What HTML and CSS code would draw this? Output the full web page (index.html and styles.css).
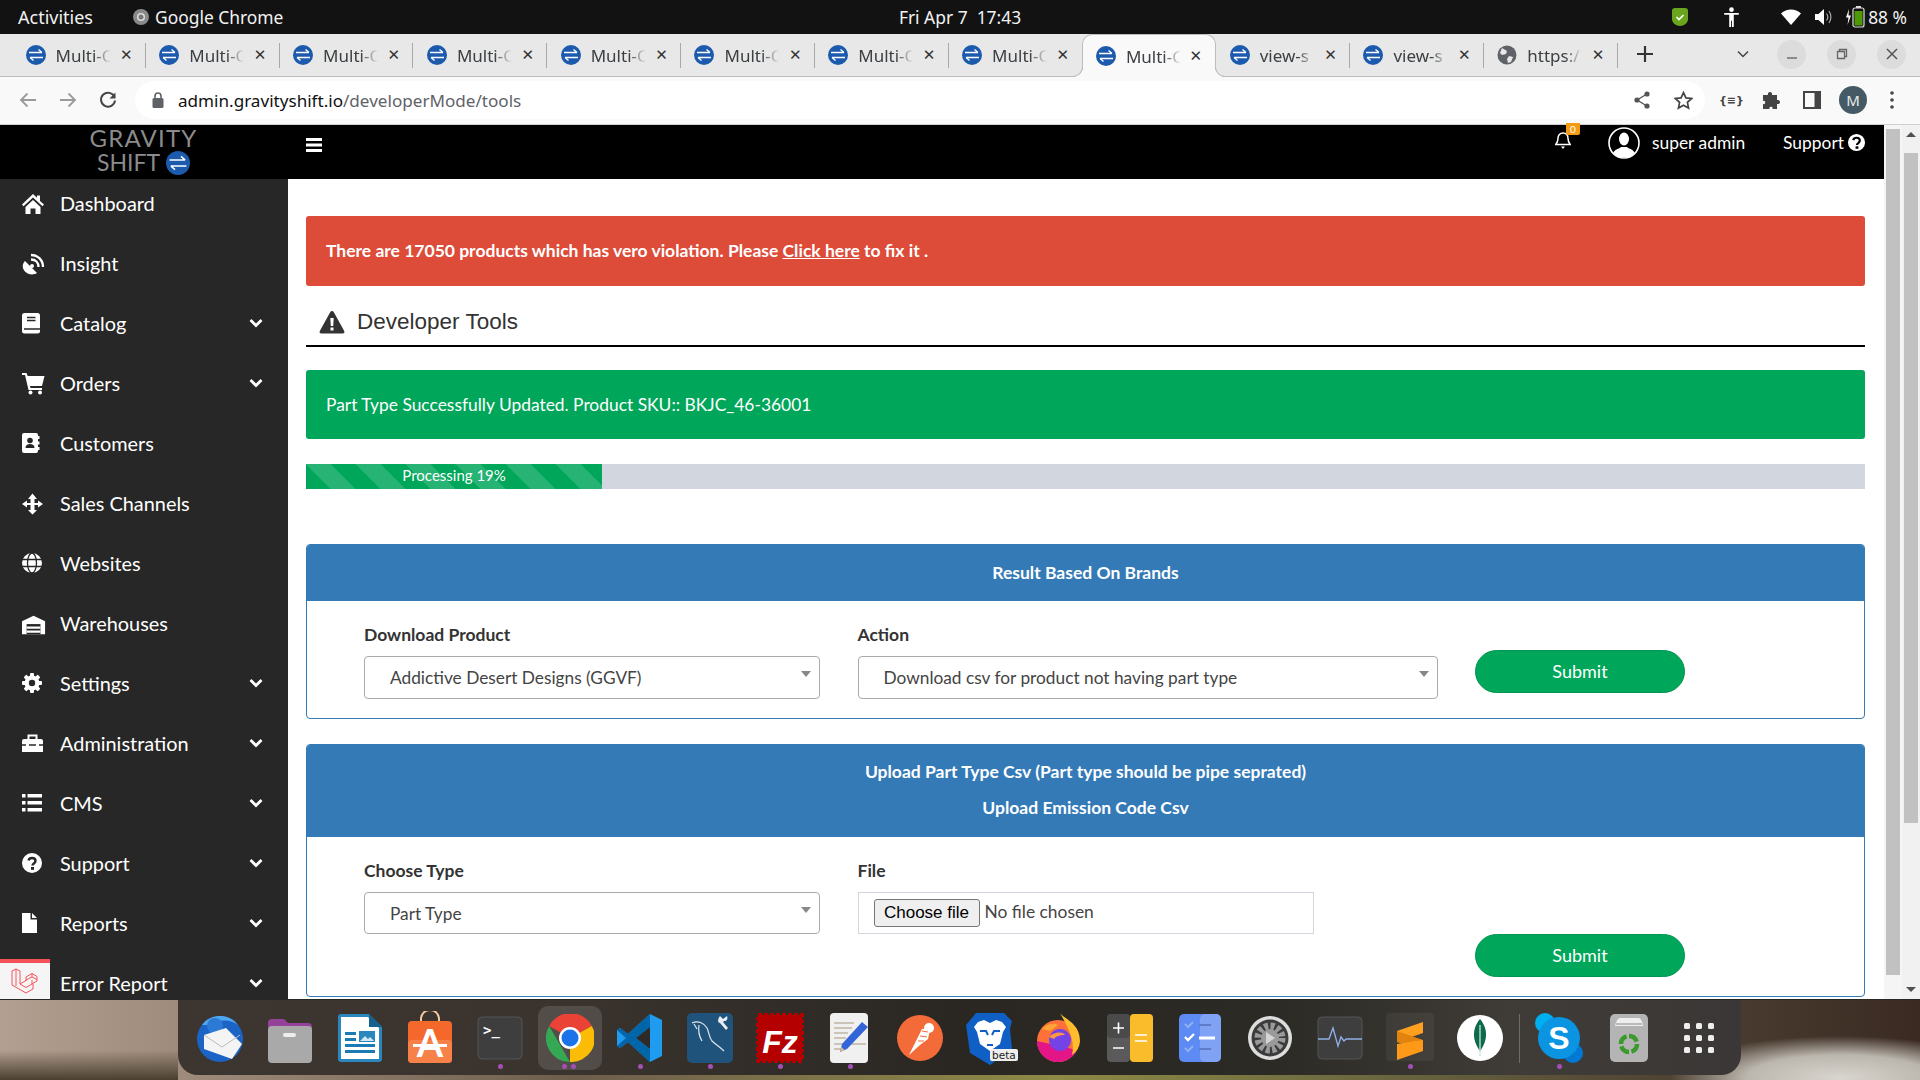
FILE: index.html
```html
<!DOCTYPE html>
<html lang="en">
<head>
<meta charset="utf-8">
<title>Developer Tools</title>
<link rel="stylesheet" href="styles.css">
</head>
<body>
<svg class="sprites" width="0" height="0">
  <symbol id="fav" viewBox="0 0 20 20"><circle cx="10" cy="10" r="10" fill="#1c5aae"/><path d="M3 7.500h13M12.500 4.500l3.500 3M17 12.500H4M7.500 15.500l-3.500-3" fill="none" stroke="#fff" stroke-width="1.300"/></symbol>
  <symbol id="home" viewBox="0 0 24 24"><path d="M11 1 0 11.500l1.500 1.800L11 4.500l9.500 8.800L22 11.500 18 8V2.500h-3v2.300z"/><path d="M3.500 14 11 7l7.500 7v7h-5v-5.500h-5V21h-5z"/></symbol>
  <symbol id="dish" viewBox="0 0 24 24"><path d="M3 8 15 20c-4 2.500-9 1.500-12-1.500C0 15.500 0 11 3 8z"/><circle cx="10" cy="13" r="2"/><path d="M9 2c7 0 12 5 12 12M9 6.500c4.500 0 7.500 3 7.500 7.500" fill="none" stroke="#fff" stroke-width="2.300"/></symbol>
  <symbol id="book" viewBox="0 0 24 24"><rect x="0" y="0" width="18" height="20.500" rx="2.500"/><path d="M5 4.500h8.500M5 7.500h8.500M2 16h16" stroke="#272727" stroke-width="1.500" fill="none"/></symbol>
  <symbol id="cart" viewBox="0 0 24 24"><path d="M0 0h4.500l1.200 3H22.500l-2.500 10H8l.5 2H20v2H6.500L3 2H0z"/><circle cx="8.500" cy="19.500" r="2"/><circle cx="18" cy="19.500" r="2"/></symbol>
  <symbol id="contact" viewBox="0 0 24 24"><rect x="0" y="0" width="16" height="20" rx="2"/><path d="M16 3h1.500v3H16zM16 8.500h1.500v3H16zM16 14h1.500v3H16z"/><circle cx="8" cy="7.500" r="2.800" fill="#272727"/><path d="M3.500 15c0-3 2-4 4.500-4s4.500 1 4.500 4z" fill="#272727"/></symbol>
  <symbol id="move" viewBox="0 0 24 24"><path d="M8.500 6v4H5V7.500L0 11l5 3.500V12h3.500v5H6l4.500 4.500L15 17h-2.500v-5H16v2.500l5-3.500-5-3.500V10h-3.500V6H15L10.500.5 6 6z"/></symbol>
  <symbol id="globe" viewBox="0 0 24 24"><circle cx="10" cy="10" r="10"/><g fill="none" stroke="#272727" stroke-width="1.300"><ellipse cx="10" cy="10" rx="4.500" ry="10"/><path d="M0 6.500h20M0 13.500h20"/></g></symbol>
  <symbol id="warehouse" viewBox="0 0 26 24"><path d="M0 8 12.500 2 25 8v14H0z"/><rect x="5" y="11" width="15" height="11" fill="#272727"/><path d="M5 13.500h15v2.500H5zM5 18h15v2.500H5z"/></symbol>
  <symbol id="gear" viewBox="0 0 24 24"><g transform="translate(10 10)"><rect x="-2" y="-10" width="4" height="20" rx="1"/><rect x="-2" y="-10" width="4" height="20" rx="1" transform="rotate(45)"/><rect x="-2" y="-10" width="4" height="20" rx="1" transform="rotate(90)"/><rect x="-2" y="-10" width="4" height="20" rx="1" transform="rotate(135)"/><circle r="7.500"/><circle r="3.200" fill="#272727"/></g></symbol>
  <symbol id="toolbox" viewBox="0 0 24 24"><path d="M0 8a2 2 0 0 1 2-2h17a2 2 0 0 1 2 2v11H0z"/><path d="M6.500 6V2.500h8V6" fill="none" stroke="#fff" stroke-width="2"/><path d="M0 12h21" stroke="#272727" stroke-width="1.500"/><path d="M4 10.500h3v3.500H4zM14 10.500h3v3.500h-3z"/></symbol>
  <symbol id="list" viewBox="0 0 24 24"><path d="M0 1h3.500v3.500H0zM5.500 1H20v3.500H5.500zM0 8h3.500v3.500H0zM5.500 8H20v3.500H5.500zM0 15h3.500v3.500H0zM5.500 15H20v3.500H5.500z"/></symbol>
  <symbol id="quest" viewBox="0 0 24 24"><circle cx="10" cy="10" r="10"/><path d="M6.500 7.500C7 5.500 8.500 5 10 5c2 0 3.500 1.200 3.500 3 0 2.500-3 2.500-3 4.500" fill="none" stroke="#272727" stroke-width="2.400"/><rect x="9" y="14" width="3" height="2.800" fill="#272727"/></symbol>
  <symbol id="file" viewBox="0 0 24 24"><path d="M0 0h8.500v6.500H15V20H0z"/><path d="M10 0l5 5h-5z"/></symbol>
  <symbol id="chev" viewBox="0 0 14 10"><path d="M1.500 2 7 7.500 12.500 2" fill="none" stroke="#fff" stroke-width="2.800"/></symbol>
</svg>

<div class="sysbar">
  <div class="sys-left">
    <span class="sys-item sys-activities">Activities</span>
    <span class="sys-app">
      <svg class="sys-chrome" viewBox="0 0 16 16"><circle cx="8" cy="8" r="8" fill="#8a8a8a"/><circle cx="8" cy="8" r="4" fill="#ddd"/><circle cx="8" cy="8" r="2.500" fill="#777"/></svg>
      <span>Google Chrome</span>
    </span>
  </div>
  <span class="sys-clock">Fri Apr 7&nbsp; 17:43</span>
  <div class="sys-right">
    <svg class="tray-shield" viewBox="0 0 16 18"><path d="M3 0h10c2 0 3 1 3 3v8c0 4-4 7-8 7s-8-3-8-7V3c0-2 1-3 3-3z" fill="#6aa51e"/><path d="M4.500 9l2.500 2.500L11.500 7" fill="none" stroke="#fff" stroke-width="1.600"/></svg>
    <svg class="tray-person" viewBox="0 0 18 22"><circle cx="9" cy="3" r="2.600" fill="#fff"/><path d="M1 6.500h16v2h-5.500V22h-2v-7h-1v7h-2V8.500H1z" fill="#fff"/></svg>
    <svg class="tray-wifi" viewBox="0 0 20 16"><path d="M0 4.500C5.500-1 14.500-1 20 4.500L10 16z" fill="#fff"/></svg>
    <svg class="tray-vol" viewBox="0 0 18 18"><path d="M0 6h3.500L9 1v16l-5.500-5H0z" fill="#fff"/><path d="M11.500 5.500c1.500 2 1.500 5 0 7M14 3c2.500 3.500 2.500 8.500 0 12" fill="none" stroke="#aaa" stroke-width="1.200"/></svg>
    <svg class="tray-bat" viewBox="0 0 20 22"><path d="M4 3 1 11.500h2.500L2.500 19 6 9.500H3.500z" fill="#fff"/><rect x="8" y="2" width="11" height="19" rx="2" fill="none" stroke="#ddd" stroke-width="1.200"/><rect x="11" y="0" width="5" height="2" fill="#ddd"/><rect x="9.500" y="5" width="8" height="14.500" fill="#4e9a06"/></svg>
    <span class="sys-item">88 %</span>
  </div>
</div>

<div class="tabstrip">
  <div class="tab"><svg class="fav"><use href="#fav"/></svg><span class="tab-title">Multi-C</span><span class="tab-x">✕</span></div>
  <div class="tab"><svg class="fav"><use href="#fav"/></svg><span class="tab-title">Multi-C</span><span class="tab-x">✕</span></div>
  <div class="tab"><svg class="fav"><use href="#fav"/></svg><span class="tab-title">Multi-C</span><span class="tab-x">✕</span></div>
  <div class="tab"><svg class="fav"><use href="#fav"/></svg><span class="tab-title">Multi-C</span><span class="tab-x">✕</span></div>
  <div class="tab"><svg class="fav"><use href="#fav"/></svg><span class="tab-title">Multi-C</span><span class="tab-x">✕</span></div>
  <div class="tab"><svg class="fav"><use href="#fav"/></svg><span class="tab-title">Multi-C</span><span class="tab-x">✕</span></div>
  <div class="tab"><svg class="fav"><use href="#fav"/></svg><span class="tab-title">Multi-C</span><span class="tab-x">✕</span></div>
  <div class="tab tab-nosep"><svg class="fav"><use href="#fav"/></svg><span class="tab-title">Multi-C</span><span class="tab-x">✕</span></div>
  <div class="tab tab-active"><svg class="fav"><use href="#fav"/></svg><span class="tab-title">Multi-C</span><span class="tab-x">✕</span></div>
  <div class="tab"><svg class="fav"><use href="#fav"/></svg><span class="tab-title">view-s</span><span class="tab-x">✕</span></div>
  <div class="tab"><svg class="fav"><use href="#fav"/></svg><span class="tab-title">view-s</span><span class="tab-x">✕</span></div>
  <div class="tab"><svg class="fav" viewBox="0 0 20 20"><circle cx="10" cy="10" r="9.500" fill="#5f6368"/><path d="M5 3l5 3-1 3-4 1-2-2zM12 11l4 1-2 5-3 1-1-4z" fill="#e8e8e8"/></svg><span class="tab-title">https:/</span><span class="tab-x">✕</span></div>
  <span class="tab-plus">
    <svg width="16" height="16" viewBox="0 0 16 16"><path d="M8 0v16M0 8h16" stroke="#333" stroke-width="2.200"/></svg>
  </span>
  <div class="win-ctrls">
    <svg class="tab-list" viewBox="0 0 12 8"><path d="M1 1.500 6 6.500l5-5" fill="none" stroke="#444" stroke-width="1.500"/></svg>
    <span class="win-btn"><svg width="12" height="12" viewBox="0 0 12 12"><path d="M1 10h10" stroke="#666" stroke-width="1.400"/></svg></span>
    <span class="win-btn"><svg width="12" height="12" viewBox="0 0 12 12"><path d="M1.500 3.500h7v7h-7zM3.500 3.500v-2h7v7h-2" fill="none" stroke="#666" stroke-width="1.300"/></svg></span>
    <span class="win-btn"><svg width="12" height="12" viewBox="0 0 12 12"><path d="M1 1l10 10M11 1 1 11" stroke="#555" stroke-width="1.500"/></svg></span>
  </div>
</div>

<div class="toolbar">
  <svg class="nav-ico nav-dim" viewBox="0 0 18 16"><path d="M17 8H2M8.500 1.500 2 8l6.500 6.500" fill="none" stroke="#9a9a9a" stroke-width="1.800"/></svg>
  <svg class="nav-ico nav-dim" viewBox="0 0 18 16"><path d="M1 8h15M9.500 1.500 16 8l-6.500 6.500" fill="none" stroke="#9a9a9a" stroke-width="1.800"/></svg>
  <svg class="nav-ico" viewBox="0 0 18 18"><path d="M15.500 6A7 7 0 1 0 16 9.500" fill="none" stroke="#444" stroke-width="2"/><path d="M16.500 1.500v6h-6z" fill="#444"/></svg>
  <div class="omnibox">
    <svg class="lock" viewBox="0 0 12 16"><rect x="0.500" y="6" width="11" height="10" rx="1.500" fill="#5f6368"/><path d="M3 6V4a3 3 0 0 1 6 0v2" fill="none" stroke="#5f6368" stroke-width="1.600"/></svg>
    <span class="url"><span class="url-host">admin.gravityshift.io</span>/developerMode/tools</span>
    <svg class="omni-share" viewBox="0 0 16 18"><g fill="#555"><circle cx="13" cy="3" r="2.600"/><circle cx="3" cy="9" r="2.600"/><circle cx="13" cy="15" r="2.600"/></g><path d="M13 3 3 9l10 6" fill="none" stroke="#555" stroke-width="1.400"/></svg>
    <svg class="omni-star" viewBox="0 0 18 18"><path d="M9 1.500l2.300 5 5.400.6-4 3.700 1.100 5.400L9 13.500l-4.800 2.700 1.100-5.400-4-3.700 5.400-.6z" fill="none" stroke="#444" stroke-width="1.600"/></svg>
  </div>
  <span class="ext-code">{≡}</span>
  <svg class="ext-puzzle" viewBox="0 0 18 18"><path d="M0 4h5c-1-4 5-4 4 0h5v5c4-1 4 5 0 4v5H9.500c1-3-4-3-3 0H0v-5c3 1 3-4 0-3z" fill="#444"/></svg>
  <svg class="ext-panel" viewBox="0 0 18 18"><path d="M0 0h18v18H0z" fill="#444"/><rect x="2" y="2" width="9.500" height="14" fill="#f9f9f9"/></svg>
  <span class="profile">M</span>
  <svg class="kebab" viewBox="0 0 4 18"><circle cx="2" cy="2" r="1.800" fill="#444"/><circle cx="2" cy="9" r="1.800" fill="#444"/><circle cx="2" cy="16" r="1.800" fill="#444"/></svg>
</div>

<div class="page">
  <div class="app">
    <header class="app-header">
      <div class="logo">
        <span class="logo-top">GRAVITY</span>
        <span class="logo-bottom">SHIFT<svg class="logo-mark"><use href="#fav"/></svg></span>
      </div>
      <svg class="hamburger" viewBox="0 0 16 14"><path d="M0 0h16v3H0zM0 5.500h16v3H0zM0 11h16v3H0z" fill="#fff"/></svg>
      <div class="header-right">
        <span class="bell">
          <svg class="bell-ico" viewBox="0 0 16 17"><path d="M8 1c3 0 5 2.200 5 5.500 0 3 1 4.500 2.200 6H.8C2 11 3 9.500 3 6.500 3 3.200 5 1 8 1z" fill="none" stroke="#fff" stroke-width="1.500"/><path d="M6 14.500h4l-2 2.500z" fill="#fff"/></svg>
          <span class="bell-badge">0</span>
        </span>
        <svg class="avatar" viewBox="0 0 32 32"><circle cx="16" cy="16" r="15" fill="#000" stroke="#fff" stroke-width="1.600"/><ellipse cx="16" cy="12" rx="5" ry="6.500" fill="#fff"/><path d="M5 26c2-4 6-4 8-6h6c2 2 6 2 8 6-3 3-7 4.500-11 4.500S8 29 5 26z" fill="#fff"/></svg>
        <span class="user-name">super admin</span>
        <span class="support-link">Support<svg class="support-ico" viewBox="0 0 20 20"><circle cx="10" cy="10" r="9" fill="#fff"/><path d="M6.500 7.500C7 5.500 8.500 5 10 5c2 0 3.500 1.200 3.500 3 0 2.500-3 2.500-3 4.500" fill="none" stroke="#000" stroke-width="2.300"/><rect x="9" y="14" width="3" height="2.600" fill="#000"/></svg></span>
      </div>
    </header>
    <div class="app-body">
      <nav class="sidebar">
        <a class="nav-row"><svg class="side-ico"><use href="#home"/></svg><span class="nav-label">Dashboard</span></a>
        <a class="nav-row"><svg class="side-ico"><use href="#dish"/></svg><span class="nav-label">Insight</span></a>
        <a class="nav-row"><svg class="side-ico"><use href="#book"/></svg><span class="nav-label">Catalog</span><svg class="chev"><use href="#chev"/></svg></a>
        <a class="nav-row"><svg class="side-ico"><use href="#cart"/></svg><span class="nav-label">Orders</span><svg class="chev"><use href="#chev"/></svg></a>
        <a class="nav-row"><svg class="side-ico"><use href="#contact"/></svg><span class="nav-label">Customers</span></a>
        <a class="nav-row"><svg class="side-ico"><use href="#move"/></svg><span class="nav-label">Sales Channels</span></a>
        <a class="nav-row"><svg class="side-ico"><use href="#globe"/></svg><span class="nav-label">Websites</span></a>
        <a class="nav-row"><svg class="side-ico"><use href="#warehouse"/></svg><span class="nav-label">Warehouses</span></a>
        <a class="nav-row"><svg class="side-ico"><use href="#gear"/></svg><span class="nav-label">Settings</span><svg class="chev"><use href="#chev"/></svg></a>
        <a class="nav-row"><svg class="side-ico"><use href="#toolbox"/></svg><span class="nav-label">Administration</span><svg class="chev"><use href="#chev"/></svg></a>
        <a class="nav-row"><svg class="side-ico"><use href="#list"/></svg><span class="nav-label">CMS</span><svg class="chev"><use href="#chev"/></svg></a>
        <a class="nav-row"><svg class="side-ico"><use href="#quest"/></svg><span class="nav-label">Support</span><svg class="chev"><use href="#chev"/></svg></a>
        <a class="nav-row"><svg class="side-ico"><use href="#file"/></svg><span class="nav-label">Reports</span><svg class="chev"><use href="#chev"/></svg></a>
        <a class="nav-row"><span class="side-ico"></span><span class="nav-label">Error Report</span><svg class="chev"><use href="#chev"/></svg></a>
        <div class="debugbar">
          <svg width="28" height="26" viewBox="0 0 28 26" fill="none" stroke="#f4525a" stroke-width="1"><path d="M1 3l4-2 4 2v13l6 3.500 6-3.500V12M9 16l6-3.500M1 3v14l14 8 7-4v-5"/><path d="M5 1v17M15 13V9l6-3.500 5 3V13l-5 3M21 5.500V9l5 2.500M21 9l-6 3"/></svg>
        </div>
      </nav>
      <main class="content">
        <div class="alert alert-danger">There are 17050 products which has vero violation. Please <a class="alert-link">Click here</a> to fix it .</div>
        <div class="page-title">
          <svg class="warn-ico" viewBox="0 0 26 24"><path d="M13 1c.8 0 1.300.4 1.700 1.100l10.500 19c.6 1.200 0 2.400-1.500 2.400H2.300c-1.500 0-2.100-1.200-1.500-2.400l10.500-19C11.700 1.400 12.200 1 13 1z" fill="#333"/><path d="M11.300 8h3.400l-.5 8h-2.400zM11.500 17.500h3v3h-3z" fill="#fff"/></svg>
          <h1>Developer Tools</h1>
        </div>
        <div class="alert alert-success">Part Type Successfully Updated. Product SKU:: BKJC_46-36001</div>
        <div class="progress"><div class="progress-bar" style="width:19%">Processing 19%</div></div>
        <section class="box box-a">
          <div class="box-head box-head-a"><div class="box-line">Result Based On Brands</div></div>
          <div class="form-row">
            <div class="field"><label class="field-label">Download Product</label><div class="select-wrap"><select class="select"><option>Addictive Desert Designs (GGVF)</option></select></div></div>
            <div class="field"><label class="field-label">Action</label><div class="select-wrap"><select class="select"><option>Download csv for product not having part type</option></select></div></div>
            <button class="btn-submit btn-a">Submit</button>
          </div>
        </section>
        <section class="box box-b">
          <div class="box-head box-head-b"><div class="box-line">Upload Part Type Csv (Part type should be pipe seprated)</div><div class="box-line">Upload Emission Code Csv</div></div>
          <div class="form-row">
            <div class="field"><label class="field-label">Choose Type</label><div class="select-wrap select-short"><select class="select"><option>Part Type</option></select></div></div>
            <div class="field"><label class="field-label">File</label><div class="file-box"><button class="file-btn">Choose file</button><span class="file-name">No file chosen</span></div></div>
            <button class="btn-submit btn-b">Submit</button>
          </div>
        </section>
      </main>
    </div>
  </div>
  <div class="scrollbars">
    <div class="sb-track"><div class="sb-thumb sb-thumb-a"></div></div>
    <div class="sb-track sb-track-b">
      <span class="sb-up"></span>
      <div class="sb-thumb sb-thumb-b"></div>
      <span class="sb-down"></span>
    </div>
  </div>
</div>

<footer class="desktop">
  <div class="dock">
    <div class="dock-item"><svg class="dk" viewBox="0 0 48 54"><circle cx="24" cy="28" r="23" fill="#1b63c4"/><path d="M6 14C14 2 34 2 42 14 34 8 24 8 18 14z" fill="#4ea6ee"/><circle cx="19" cy="15" r="8" fill="#2a7ad6"/><path d="M8 24 30 17 46 33 36 48 8 38z" fill="#f4f4f4"/><path d="M8 24 26 36 44 24" fill="none" stroke="#bbb"/></svg></div>
    <div class="dock-item"><svg class="dk" viewBox="0 0 48 54"><path d="M2 12a4 4 0 0 1 4-4h12l4 4h20a4 4 0 0 1 4 4v10H2z" fill="#95419a"/><rect x="2" y="15" width="44" height="37" rx="4" fill="#a9a9a9"/><rect x="17" y="22" width="13" height="4" rx="2" fill="#eee"/></svg></div>
    <div class="dock-item"><svg class="dk" viewBox="0 0 48 54"><path d="M2 6a3 3 0 0 1 3-3h28l13 13v32a3 3 0 0 1-3 3H5a3 3 0 0 1-3-3z" fill="#2a87bd"/><path d="M5 6h27l11 11v31H5z" fill="#fff"/><path d="M33 3l13 13H33z" fill="#13618f"/><path d="M9 21h11v3H9zM9 27h11v3H9zM9 33h30v3H9zM9 39h30v3H9z" fill="#1b7bb5"/><rect x="23" y="20" width="16" height="11" fill="#2a87bd"/><path d="M24 30l5-5 3 3 2-2 4 4z" fill="#cfe6f4"/></svg></div>
    <div class="dock-item"><svg class="dk" viewBox="0 0 48 54"><path d="M15 12V8a9 9 0 0 1 18 0v4" fill="none" stroke="#f3c9a2" stroke-width="2"/><rect x="2" y="10" width="44" height="42" rx="4" fill="#f4682c"/><rect x="2" y="29" width="44" height="23" rx="4" fill="#f68149"/><text x="24" y="46" class="dk-a">A</text><rect x="7" y="33" width="34" height="3" fill="#fff"/></svg></div>
    <div class="dock-item dock-dot"><svg class="dk" viewBox="0 0 48 54"><rect x="2" y="6" width="44" height="42" rx="4" fill="#3e3e3e" stroke="#555"/><text x="7" y="24" class="dk-term">&gt;_</text></svg></div>
    <div class="dock-item dock-active dock-dot2"><svg class="dk dk-chrome" viewBox="0 0 48 48"><path d="M24 24 3.200 12A24 24 0 0 1 45.800 12z" fill="#ea4335"/><path d="M24 24 45.800 12A24 24 0 0 1 24 48z" fill="#fbbc05"/><path d="M3.200 12 24 48A24 24 0 0 1 3.200 12z" fill="#34a853"/><circle cx="24" cy="24" r="11" fill="#fff"/><circle cx="24" cy="24" r="8.500" fill="#1a73e8"/></svg></div>
    <div class="dock-item dock-dot"><svg class="dk" viewBox="0 0 48 54"><path d="M34 3 46 9v36l-12 6L12 31l-8 6-3-2V19l3-2 8 6z" fill="#1f9cf0"/><path d="M34 3 12 23l-8-6-3 2 9 8-9 8 3 2 8-6 22 20V38L20 27 34 16z" fill="#0065a9"/><path d="M34 16 20 27l14 11z" fill="#2d2a27"/></svg></div>
    <div class="dock-item dock-dot"><svg class="dk" viewBox="0 0 48 54"><rect x="1" y="2" width="46" height="50" rx="5" fill="#20537c"/><path d="M6 12c6-3 12 0 15 5 2 4 2 9 5 13 3 3 8 6 12 10M13 14c-1 6 0 11 3 16M8 13l3 5" fill="none" stroke="#dfe7ee" stroke-width="1.200"/><path d="M34 5l3 3 4-3c1 3 0 5-3 5l-1 1 5 6-2 2-6-7c-2 0-3-3 0-7z" fill="#e8eef3"/></svg></div>
    <div class="dock-item dock-dot"><svg class="dk" viewBox="0 0 48 54"><rect x="2" y="4" width="44" height="46" fill="#b40000" stroke="#b40000" stroke-width="4" stroke-dasharray="4 2"/><text x="24" y="42" class="dk-fz">Fz</text></svg></div>
    <div class="dock-item dock-dot"><svg class="dk" viewBox="0 0 48 54"><rect x="4" y="2" width="38" height="50" rx="4" fill="#f0f0f0"/><path d="M8 12h20M8 17h18M8 22h14M8 27h12M8 33h32M8 38h8" stroke="#c9c4b5" stroke-width="2"/><path d="M36 11l6 5-21 22-7 3 2-8z" fill="#3465d8"/><path d="M14 41l1.500-5 3 3z" fill="#e6b98a"/></svg></div>
    <div class="dock-item"><svg class="dk" viewBox="0 0 48 54"><circle cx="24" cy="27" r="23" fill="#f26b38"/><ellipse cx="33" cy="17" rx="5" ry="5" fill="#fff"/><path d="M13 44 22 26 26 18h8l-2 10-8 6z" fill="#fff"/><path d="M26 20l6 1M24 25l7 1M22 30l6 0" stroke="#f26b38"/></svg></div>
    <div class="dock-item dock-brave"><svg class="dk" viewBox="0 0 48 54"><path d="M10 2h28l8 8-2 8 2 20-22 16L4 42 0 14z" fill="#0f5fc4"/><path d="M12 11l6-2 6 3 6-3 6 2 4 5-3 5-3 12-10 7-10-7-3-12-3-5z" fill="#fff"/><path d="M14 20h6l2 4M34 20h-6l-2 4M21 34h6" fill="none" stroke="#0f5fc4" stroke-width="2"/></svg><span class="beta">beta</span></div>
    <div class="dock-item"><svg class="dk" viewBox="0 0 48 54"><circle cx="22" cy="30" r="21" fill="#ff7139"/><path d="M1 30a21 21 0 0 0 40 9L1 30z" fill="#e31587"/><path d="M24 2c4 6 20 10 20 28a18 18 0 0 1-8 14c3-14-2-24-12-42z" fill="#ffbd2e"/><path d="M6 18c6-6 12-6 16-4l-8 6z" fill="#ffa436"/><circle cx="24" cy="29" r="11" fill="#7542e5"/><path d="M13 26c4-5 14-6 16-2-5 0-9 1-11 4z" fill="#ff9640"/></svg></div>
    <div class="dock-item"><svg class="dk" viewBox="0 0 48 54"><rect x="1" y="3" width="23" height="48" rx="4" fill="#5a5a5a"/><rect x="1" y="3" width="23" height="24" rx="4" fill="#4a4a4a"/><rect x="24" y="3" width="23" height="48" rx="4" fill="#fbbc2c"/><path d="M7 17h11M12.500 11.500v11M7 37h11M29 24h12M29 30h12" stroke="#fff" stroke-width="1.600"/></svg></div>
    <div class="dock-item"><svg class="dk" viewBox="0 0 48 54"><rect x="3" y="3" width="42" height="48" rx="5" fill="#5e8af3"/><rect x="24" y="3" width="21" height="48" rx="5" fill="#7fa2f5"/><path d="M9 13l3 3 5-5M9 37l3 3 5-5" fill="none" stroke="#8fb0f5" stroke-width="2"/><path d="M9 26l3 3 6-6" fill="none" stroke="#fff" stroke-width="2.400"/><path d="M23 14h12M23 38h12" stroke="#5e7cc8" stroke-width="2"/><path d="M23 27h16" stroke="#fff" stroke-width="3"/></svg></div>
    <div class="dock-item"><svg class="dk" viewBox="0 0 48 54"><circle cx="24" cy="27" r="22" fill="#ddd"/><circle cx="24" cy="27" r="18.500" fill="#3b3b3b"/><circle cx="24" cy="27" r="12" fill="none" stroke="#9a9a9a" stroke-width="7" stroke-dasharray="4 2.300"/><circle cx="24" cy="27" r="9" fill="#9a9a9a"/><path d="M20 21l9 6-9 6z" fill="#d5d5d5"/></svg></div>
    <div class="dock-item"><svg class="dk" viewBox="0 0 48 54"><rect x="2" y="6" width="44" height="42" rx="4" fill="#3e3e3e" stroke="#555"/><path d="M2 28h11l4-11 5 18 3-9 3 4 2-2h16" fill="none" stroke="#8fb0e8" stroke-width="1.300"/></svg></div>
    <div class="dock-item dock-dot dock-sublime"><svg class="dk" viewBox="0 0 48 54"><path d="M11 20 37 11V22L11 31z" fill="#ffa01e"/><path d="M11 20 37 29V40L11 31z" fill="#e2830f"/><path d="M11 33 37 29V40L11 49z" fill="#ff9a18"/></svg></div>
    <div class="dock-item"><svg class="dk" viewBox="0 0 48 54"><circle cx="24" cy="27" r="23" fill="#fff"/><path d="M24 8c7 8 9 20 0 32-9-12-7-24 0-32z" fill="#0c6b4a"/><path d="M24 14v31" stroke="#cfe3d9" stroke-width="1.300"/></svg></div>
    <span class="dock-sep"></span>
    <div class="dock-item dock-dot"><svg class="dk" viewBox="0 0 48 54"><circle cx="10" cy="12" r="10" fill="#00aff0"/><circle cx="38" cy="42" r="10" fill="#0078d4"/><circle cx="24" cy="27" r="21" fill="#0a94e2"/><text x="24" y="38" class="dk-skype">S</text></svg></div>
    <div class="dock-item"><svg class="dk" viewBox="0 0 48 54"><rect x="5" y="3" width="38" height="48" rx="5" fill="#b4b4b4"/><path d="M10 15c2-8 4-8 6-8h17c2 0 4 1 5 8z" fill="#eee"/><path d="M11 13h26" stroke="#888"/><circle cx="24" cy="33" r="8" fill="none" stroke="#3a9a2c" stroke-width="4.500" stroke-dasharray="10 2.500"/></svg></div>
    <div class="dock-item dock-grid">
      <span class="dot"></span><span class="dot"></span><span class="dot"></span>
      <span class="dot"></span><span class="dot"></span><span class="dot"></span>
      <span class="dot"></span><span class="dot"></span><span class="dot"></span>
    </div>
  </div>
</footer>
</body>
</html>
```

FILE: styles.css
```css
* { box-sizing: border-box; }
html, body { margin: 0; padding: 0; }
body {
  width: 1920px;
  height: 1080px;
  overflow: hidden;
  display: flex;
  flex-direction: column;
  font-family: "Lato", "Liberation Sans", sans-serif;
  background: #000;
}
.sprites { position: absolute; }

/* system bar */
.sysbar {
  height: 34px;
  flex: none;
  background: #121212;
  color: #f2f2f2;
  font: 17.4px "Noto Sans", sans-serif;
  display: flex;
  align-items: center;
  justify-content: space-between;
  padding: 0 13px 1px 18px;
  position: relative;
}
.sys-left { display: flex; align-items: center; gap: 40px; }
.sys-item { white-space: nowrap; }
.sys-activities { font-size: 18px; }
.sys-app { display: flex; align-items: center; gap: 6px; }
.sys-chrome { width: 16px; height: 16px; }
.sys-clock { position: absolute; left: 0; right: 0; text-align: center; pointer-events: none; }
.sys-right { display: flex; align-items: center; }
.tray-shield { width: 16px; height: 18px; margin-right: 35px; }
.tray-person { width: 17px; height: 20px; margin-right: 41px; }
.tray-wifi { width: 20px; height: 16px; margin-right: 14px; }
.tray-vol { width: 18px; height: 18px; margin-right: 12px; }
.tray-bat { width: 20px; height: 22px; margin-right: 3px; }

/* tabs */
.tabstrip {
  height: 43px;
  flex: none;
  background: #e8e8e8;
  border-bottom: 1px solid #bdbdbd;
  padding-left: 12px;
  display: flex;
  align-items: stretch;
  position: relative;
}
.tab {
  width: 133.8px;
  flex: none;
  position: relative;
  display: flex;
  align-items: center;
  padding: 0 12px 0 13.5px;
  color: #3c4043;
  font: 17px "Noto Sans", sans-serif;
}
.tab::after {
  content: "";
  position: absolute;
  right: 0;
  top: 9px;
  height: 25px;
  width: 1px;
  background: #a8a8a8;
}
.tab-nosep::after { display: none; }
.tab-active {
  background: #f9f9f9;
  border: 1px solid #bdbdbd;
  border-bottom: none;
  border-radius: 10px 10px 0 0;
  margin-bottom: -1px;
  z-index: 1;
  padding-left: 12.5px;
}
.tab-active::after, .tab-active::before {
  content: "";
  display: block;
  position: absolute;
  top: auto;
  bottom: 0;
  width: 10px;
  height: 10px;
  background: #e8e8e8;
  border: 0 solid #bdbdbd;
}
.tab-active::before { left: -11px; border-right-width: 1px; border-bottom-width: 1px; border-bottom-right-radius: 10px; box-shadow: 4px 4px 0 #f9f9f9; }
.tab-active::after { right: -11px; border-left-width: 1px; border-bottom-width: 1px; border-bottom-left-radius: 10px; box-shadow: -4px 4px 0 #f9f9f9; }
.fav { width: 20px; height: 20px; flex: none; }
.tab-title {
  width: 61px;
  margin-left: 10px;
  white-space: nowrap;
  -webkit-mask-image: linear-gradient(to right, #000 62%, transparent 90%);
  mask-image: linear-gradient(to right, #000 62%, transparent 90%);
}
.tab-x { margin-left: auto; width: 15px; text-align: center; font-size: 15px; color: #333; font-family: "DejaVu Sans", sans-serif; }
.tab-plus { margin-left: 19px; display: flex; align-items: center; padding-bottom: 2px; }
.win-ctrls { margin-left: auto; display: flex; align-items: center; padding-right: 14px; padding-bottom: 2px; }
.tab-list { width: 12px; height: 8px; margin-right: 28px; }
.win-btn {
  width: 29px;
  height: 29px;
  border-radius: 50%;
  background: #dcdcdc;
  display: flex;
  align-items: center;
  justify-content: center;
  margin-left: 21px;
}
.win-btn:first-of-type { margin-left: 0; }

/* toolbar */
.toolbar {
  height: 48px;
  flex: none;
  background: #f9f9f9;
  border-bottom: 1px solid #cfcfcf;
  display: flex;
  align-items: center;
  padding: 0 0 1px 19px;
}
.nav-ico { width: 18px; height: 18px; margin-right: 22px; flex: none; }
.nav-ico:nth-of-type(3) { margin-right: 18px; }
.omnibox {
  width: 1570px;
  height: 38px;
  background: #fff;
  border-radius: 19px;
  display: flex;
  align-items: center;
  padding-left: 17px;
  flex: none;
}
.lock { width: 12px; height: 16px; margin-right: 14px; flex: none; }
.url { font: 17.1px "Noto Sans", sans-serif; color: #5f6368; white-space: nowrap; }
.url-host { color: #111; }
.omni-share { width: 16px; height: 18px; margin-left: auto; margin-right: 24px; flex: none; }
.omni-star { width: 19px; height: 19px; margin-right: 12px; flex: none; }
.ext-code { margin-left: 14px; width: 18px; font: bold 11px "DejaVu Sans", sans-serif; color: #444; white-space: nowrap; }
.ext-puzzle { width: 18px; height: 18px; margin-left: 26px; flex: none; }
.ext-panel { width: 18px; height: 18px; margin-left: 22px; flex: none; }
.profile {
  width: 28px;
  height: 28px;
  margin-left: 18px;
  border-radius: 50%;
  background: #455a64;
  color: #e8eaed;
  font: 15px "Noto Sans", sans-serif;
  display: flex;
  align-items: center;
  justify-content: center;
  flex: none;
}
.kebab { width: 4px; height: 18px; margin-left: 23px; flex: none; }

/* page */
.page { height: 874px; flex: none; display: flex; background: #fff; }
.app { width: 1884px; flex: none; display: flex; flex-direction: column; }
.app-header {
  height: 54px;
  flex: none;
  background: #000;
  color: #fff;
  display: flex;
  align-items: flex-start;
  position: relative;
}
.logo {
  width: 288px;
  flex: none;
  display: flex;
  flex-direction: column;
  align-items: center;
  color: #8b8b8b;
  font: 400 24px/25px "Lato", sans-serif;
  padding-top: 0;
  padding-right: 1px;
}
.logo-top { letter-spacing: 1.2px; }
.logo-bottom { display: flex; align-items: center; font-size: 23px; height: 25px; }
.logo-mark { width: 24px; height: 24px; margin-left: 6px; }
.hamburger { width: 16px; height: 14px; margin: 13px 0 0 18px; }
.header-right { margin-left: auto; display: flex; align-items: center; height: 35px; padding-right: 18px; font-size: 17.4px; }
.bell { position: relative; display: block; width: 16px; height: 17px; margin-right: 37px; margin-top: -4px; }
.bell-ico { width: 16px; height: 17px; display: block; }
.bell-badge {
  position: absolute;
  left: 11px;
  top: -9px;
  width: 14px;
  height: 12px;
  background: #f39c12;
  border-radius: 0 0 2px 2px;
  font-size: 10px;
  line-height: 12px;
  text-align: center;
  color: #fff;
}
.avatar { width: 32px; height: 32px; margin-right: 12px; }
.user-name { margin-right: 38px; white-space: nowrap; }
.support-link { display: flex; align-items: center; white-space: nowrap; }
.support-ico { width: 19px; height: 19px; margin-left: 3px; }

.app-body { flex: 1; display: flex; min-height: 0; }
.sidebar {
  width: 288px;
  flex: none;
  background: #272727;
  padding-top: 12px;
  display: flex;
  flex-direction: column;
  gap: 36px;
  overflow: hidden;
  position: relative;
}
.nav-row { height: 24px; flex: none; display: flex; align-items: center; padding: 0 25px 0 22px; color: #fff; font-size: 19.9px; }
.side-ico { width: 24px; height: 24px; margin: 3px 14px 0 0; flex: none; fill: #fff; color: #fff; overflow: visible; }
.nav-label { white-space: nowrap; }
.chev { width: 14px; height: 10px; margin-left: auto; }
.debugbar {
  position: absolute;
  left: 0;
  bottom: 0;
  width: 50px;
  height: 40px;
  background: #f5f5f5;
  border-top: 4px solid #f4525a;
  display: flex;
  align-items: center;
  justify-content: center;
}

/* content */
.content { flex: 1; min-width: 0; padding: 37px 19px 0 18px; overflow: hidden; background: #fff; }
.alert { border-radius: 3px; color: #fff; display: flex; align-items: center; padding: 0 20px; white-space: pre-wrap; }
.alert-danger { height: 70px; background: #dd4b39; font-size: 17.5px; font-weight: 700; display: block; line-height: 69px; }
.alert-link { color: #fff; text-decoration: underline; }
.page-title { height: 61px; border-bottom: 2px solid #000; display: flex; align-items: center; padding: 13px 0 0 13px; margin-bottom: 23px; }
.warn-ico { width: 26px; height: 24px; flex: none; }
.page-title h1 { margin: 0 0 0 12px; font: 400 22.5px "Liberation Sans", sans-serif; color: #333; }
.alert-success { height: 69px; background: #00a65a; font-size: 17.4px; margin-bottom: 25px; padding-bottom: 1px; }
.progress { height: 25px; background: #d2d6de; margin-bottom: 55px; }
.progress-bar {
  height: 100%;
  background-color: #00a65a;
  background-image: linear-gradient(45deg, rgba(255,255,255,.15) 25%, transparent 25%, transparent 50%, rgba(255,255,255,.15) 50%, rgba(255,255,255,.15) 75%, transparent 75%, transparent);
  background-size: 50px 50px;
  color: #fff;
  font-size: 15px;
  line-height: 23px;
  text-align: center;
}
.box { border: 1px solid #337ab7; border-radius: 4px; background: #fff; overflow: hidden; }
.box-a { height: 175px; margin-bottom: 25px; }
.box-b { height: 253px; }
.box-head { background: #337ab7; color: #fff; margin: -1px -1px 0; display: flex; flex-direction: column; justify-content: center; text-align: center; font-size: 17.5px; font-weight: 700; }
.box-head-a { height: 57px; }
.box-head-b { height: 93px; padding-bottom: 2px; }
.box-line { line-height: 36px; }
.form-row { display: grid; grid-template-columns: 456px 580px 210px; column-gap: 37.5px; align-items: start; padding: 22px 0 0 57px; }
.field { min-width: 0; }
.field-label { display: block; height: 24px; line-height: 24px; margin-bottom: 9px; font-size: 17.5px; font-weight: 700; color: #333; }
.select-wrap { position: relative; height: 43px; }
.select-short { height: 42px; }
.select-wrap::after {
  content: "";
  position: absolute;
  top: 15px;
  right: 9px;
  border-left: 5px solid transparent;
  border-right: 5px solid transparent;
  border-top: 6px solid #888;
}
.select {
  display: block;
  width: 100%;
  height: 100%;
  appearance: none;
  -webkit-appearance: none;
  background: #fff;
  border: 1px solid #aaa;
  border-radius: 4px;
  padding: 0 0 0 25px;
  font: 17.3px "Lato", sans-serif;
  color: #444;
}
.file-box { width: 456px; height: 42px; border: 1px solid #d2d6de; display: flex; align-items: center; padding-left: 15px; }
.file-btn {
  font: 17px "Liberation Sans", sans-serif;
  height: 28px;
  width: 106px;
  padding: 0;
  margin-right: 5px;
  background: #efefef;
  border: 1px solid #767676;
  border-radius: 3px;
  color: #000;
  flex: none;
}
.file-name { font-size: 17.4px; line-height: 1; padding-bottom: 2px; color: #444; white-space: nowrap; }
.btn-submit {
  width: 210px;
  height: 43px;
  border: 1px solid #009551;
  border-radius: 22px;
  background: #00a65a;
  color: #fff;
  padding: 0 0 2px;
  font: 18px "Lato", sans-serif;
}
.btn-a { margin-top: 27px; }
.btn-b { margin-top: 75px; }

/* fake page scrollbars */
.scrollbars { width: 36px; flex: none; display: flex; background: #f5f5f5; }
.sb-track { width: 18px; position: relative; padding: 4px 2px 0; }
.sb-track-b { background: #f1f1f1; padding-top: 28px; }
.sb-thumb { width: 14px; background: #c1c1c1; }
.sb-thumb-a { height: 846px; }
.sb-thumb-b { height: 670px; }
.sb-up, .sb-down { position: absolute; left: 4px; border-left: 5px solid transparent; border-right: 5px solid transparent; }
.sb-up { top: 7px; border-bottom: 5px solid #505050; }
.sb-down { bottom: 7px; border-top: 5px solid #505050; }

/* desktop + dock */
.desktop {
  height: 81px;
  flex: none;
  border-top: 1px solid #2a2723;
  position: relative;
  background:
    radial-gradient(ellipse 170px 42px at 1840px 78px, #d9d6cf 0%, rgba(200,196,188,.9) 55%, transparent 100%),
    linear-gradient(90deg, #b39f91 0%, #a08c7c 9%, #6d5e4c 30%, #8d8a45 55%, #6d6a40 70%, #4a3c30 90%, #3a2a22 100%);
}
.desktop::before {
  content: "";
  position: absolute;
  left: 0;
  bottom: 0;
  height: 30px;
  width: 178px;
  background: linear-gradient(to top, #4a4030, transparent);
}
.dock {
  position: absolute;
  left: 178px;
  top: 0;
  width: 1563px;
  height: 75px;
  padding: 0 7px;
  border-radius: 0 0 20px 20px;
  background: linear-gradient(90deg, #3c3530 0%, #3a332e 25%, #2a2722 50%, #2c2a24 70%, #3f3c38 85%, #3a3736 100%);
  display: flex;
  align-items: stretch;
}
.dock-item { width: 70px; flex: none; position: relative; display: flex; align-items: center; justify-content: center; }
.dk { width: 48px; height: 54px; margin-top: 1px; position: relative; }
.dk-chrome { height: 48px; }
.dock-active::before {
  content: "";
  position: absolute;
  left: 3px;
  top: 6px;
  width: 64px;
  height: 64px;
  border-radius: 10px;
  background: rgba(255,255,255,.13);
}
.dock-sublime::before {
  content: "";
  position: absolute;
  left: 11px;
  top: 13px;
  width: 48px;
  height: 48px;
  border-radius: 4px;
  background: rgba(255,255,255,.05);
}
.dock-dot::after, .dock-dot2::after {
  content: "";
  position: absolute;
  left: 32.5px;
  top: 64px;
  width: 5px;
  height: 5px;
  border-radius: 50%;
  background: #a34fb5;
}
.dock-dot2::after { left: 27px; box-shadow: 9px 0 0 #a34fb5; }
.dock-sep { width: 1px; margin: 14px 4px 12px; background: #6e6b68; flex: none; }
.beta {
  position: absolute;
  left: 35px;
  top: 49px;
  background: #eee;
  color: #222;
  border-radius: 2px;
  font: 10.500px/12px "DejaVu Sans", sans-serif;
  padding: 0 2px;
}
.dock-grid { display: grid; grid-template-columns: repeat(3, 6px); grid-auto-rows: 6px; gap: 6px; align-content: center; justify-content: center; padding-top: 1px; }
.dot { width: 6px; height: 6px; border-radius: 1.500px; background: #eee; }
.dk-a { font: 700 38px "Lato", sans-serif; fill: #fff; text-anchor: middle; }
.dk-term { font: 700 14px "DejaVu Sans Mono", monospace; fill: #fff; }
.dk-fz { font: italic 700 32px "Liberation Sans", sans-serif; fill: #fff; text-anchor: middle; }
.dk-skype { font: 700 32px "Liberation Sans", sans-serif; fill: #fff; text-anchor: middle; }
```
